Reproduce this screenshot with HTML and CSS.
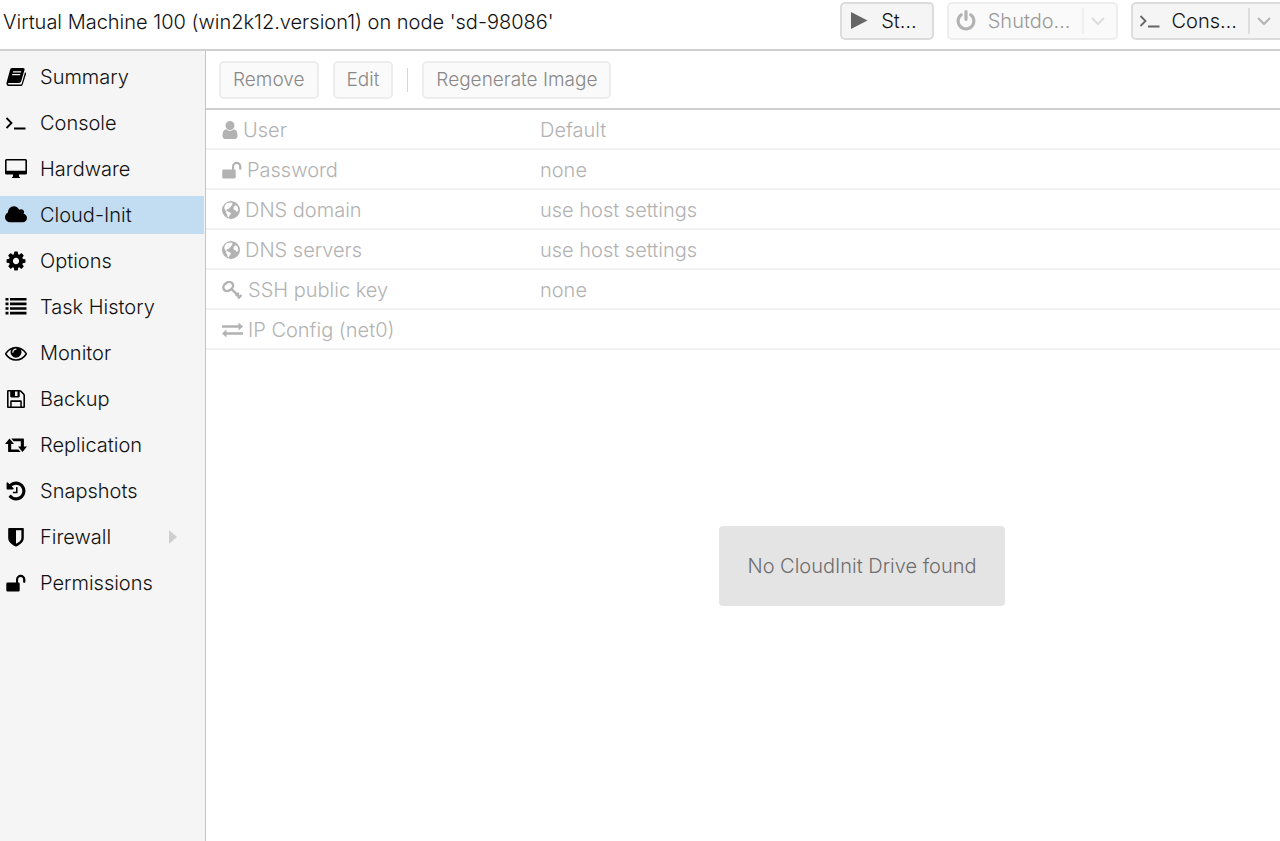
FILE: index.html
```html
<!DOCTYPE html>
<html lang="en">
<head>
    <meta charset="UTF-8">
    <meta name="viewport" content="width=device-width, initial-scale=1.0">
    <title>Virtual Machine 100 - Cloud-Init</title>
    <link rel="stylesheet" href="styles.css">
</head>
<body>
    <!-- icons used more than once -->
    <svg class="sprite" aria-hidden="true">
        <symbol id="i-terminal" viewBox="0 0 22 22">
            <path d="M1.5 6l5 5-5 5M9 16.500h11.500" fill="none" stroke="currentColor" stroke-width="1.800"/>
        </symbol>
        <symbol id="i-unlock" viewBox="0 0 22 22">
            <path d="M2.500 10.500h8.500V7.500a4.700 4.700 0 0 1 9.400 0v2.500a.8.8 0 0 1-.8.8h-.7a.8.8 0 0 1-.8-.8V7.500a2.500 2.500 0 0 0-5 0v3h.4a1.200 1.200 0 0 1 1.200 1.200v6.600a1.200 1.200 0 0 1-1.200 1.200h-11a1.200 1.200 0 0 1-1.200-1.200v-6.600a1.200 1.200 0 0 1 1.200-1.200z"/>
        </symbol>
        <symbol id="i-globe" viewBox="0 0 18 18">
            <path fill-rule="evenodd" d="M9 0a9 9 0 1 0 0 18A9 9 0 0 0 9 0zM7.200 1.800l2.300-.3 1.300.8-.9 1 .8.8-1.500.6-.6 1.300-1.300.9-.8 1.400-1.500-.2-.7 1.100 1 .7.900.9 1.700.5 1.100 1.100-.8 1.500-1 .8-.5 1.700-1.200-.6-.3-2.400-1.200-1.500.4-1.500-1.300-1.500-.9-2.100.9-2.600 1.700-1.900zM12.300 5.100l1.700-.9 1.600 1.600.7 2.600-.6 1.800-1.500.8-.6-1.700-1.700-.6-.5-1.600z"/>
        </symbol>
        <symbol id="i-chevron" viewBox="0 0 14 14">
            <path d="M1 4l6 6 6-6" fill="none" stroke="currentColor" stroke-width="2"/>
        </symbol>
    </svg>

    <header class="header">
        <h1 class="title">Virtual Machine 100 (win2k12.version1) on node 'sd-98086'</h1>
        <div class="actions">
            <button class="btn start" type="button">
                <svg class="icon" viewBox="0 0 22 22"><path d="M3 2l16.500 8.500L3 19z"/></svg>
                St…
            </button>
            <div class="split disabled">
                <button class="btn" type="button" disabled>
                    <svg class="icon" viewBox="0 0 1792 1792"><path d="M1664 896q0 156-61 298t-164 245-245 164-298 61-298-61-245-164-164-245-61-298q0-182 80.500-343t226.500-270q43-32 95.500-25t83.500 50q32 42 24.500 94.500t-49.500 84.500q-98 74-151.500 181t-53.500 228q0 104 40.500 198.500t109.500 163.500 163.500 109.500 198.500 40.500 198.500-40.500 163.500-109.500 109.500-163.500 40.500-198.500q0-121-53.500-228t-151.500-181q-42-32-49.500-84.500t24.500-94.500q31-43 84-50t95 25q146 109 226.500 270t80.500 343zm-640-768v640q0 52-38 90t-90 38-90-38-38-90v-640q0-52 38-90t90-38 90 38 38 90z"/></svg>
                    Shutdo…
                </button>
                <button class="arrow" type="button" aria-label="More shutdown options" disabled><svg><use href="#i-chevron"/></svg></button>
            </div>
            <div class="split">
                <button class="btn" type="button">
                    <svg class="icon"><use href="#i-terminal"/></svg>
                    Cons…
                </button>
                <button class="arrow" type="button" aria-label="More console options"><svg><use href="#i-chevron"/></svg></button>
            </div>
        </div>
    </header>

    <div class="content">
        <nav class="sidebar">
            <a href="#summary">
                <svg class="icon" viewBox="0 0 22 22"><path fill-rule="evenodd" d="M7 2h11c1.300 0 1.900.9 1.500 2.100l-3.300 11.200c-.4 1.200-1 1.700-2.300 1.700H4c-.8 0-1.100.5-.9 1 .3.500.8.600 1.500.6h10.700c.7 0 1.200-.4 1.500-1.200L20 6.300c.9.400 1.200 1 .9 2l-3.100 9.900c-.4 1.200-1.400 1.900-2.600 1.900H4.400c-2 0-3.400-1.500-2.900-3.400L5 4c.4-1.300 1-2 2-2zm1.200 3.300l-.4 1.200h8.100l.4-1.200zm-.9 2.800l-.4 1.200H15l.4-1.200z"/></svg>
                Summary
            </a>
            <a href="#console">
                <svg class="icon"><use href="#i-terminal"/></svg>
                Console
            </a>
            <a href="#hardware">
                <svg class="icon" viewBox="0 0 22 22"><path fill-rule="evenodd" d="M1.500 1h19A1.500 1.500 0 0 1 22 2.500V15a1.500 1.500 0 0 1-1.500 1.500H14v2c.7.300 1 .6 1 1v.5H7v-.5c0-.4.300-.7 1-1v-2H1.500A1.500 1.500 0 0 1 0 15V2.500A1.500 1.500 0 0 1 1.500 1zM1.600 2.600v10.200h18.800V2.600z"/></svg>
                Hardware
            </a>
            <a href="#cloud-init" class="active" aria-current="page">
                <svg class="icon" viewBox="64 0 1920 1792"><path d="M1984 1152q0 159-112.500 271.500t-271.500 112.500h-1088q-185 0-316.500-131.500t-131.500-316.500q0-132 71-241.500t187-163.500q-2-28-2-43 0-212 150-362t362-150q158 0 286.500 88t187.500 230q70-62 166-62 106 0 181 75t75 181q0 75-41 138 129 30 213 134.500t84 239.500z"/></svg>
                Cloud-Init
            </a>
            <a href="#options">
                <svg class="icon" viewBox="0 0 1792 1792"><path d="M1152 896q0-106-75-181t-181-75-181 75-75 181 75 181 181 75 181-75 75-181zm512-109v222q0 12-8 23t-20 13l-185 28q-19 54-39 91 35 50 107 138 10 12 10 25t-9 23q-27 37-99 108t-94 71q-12 0-26-9l-138-108q-44 23-91 38-16 136-29 186-7 28-36 28h-222q-14 0-24.500-8.500t-11.500-21.500l-28-184q-49-16-90-37l-141 107q-10 9-25 9-14 0-25-11-126-114-165-168-7-10-7-23 0-12 8-23 15-21 51-66.500t54-70.500q-27-50-41-99l-183-27q-13-2-21-12.500t-8-23.500v-222q0-12 8-23t19-13l186-28q14-46 39-92-40-57-107-138-10-12-10-24 0-10 9-23 26-36 98.500-107.500t94.500-71.500q13 0 26 10l138 107q44-23 91-38 16-136 29-186 7-28 36-28h222q14 0 24.500 8.500t11.500 21.500l28 184q49 16 90 37l142-107q9-9 24-9 13 0 25 10 129 119 165 170 7 8 7 22 0 12-8 23-15 21-51 66.500t-54 70.500q26 50 41 98l183 28q13 2 21 12.500t8 23.500z"/></svg>
                Options
            </a>
            <a href="#tasks">
                <svg class="icon" viewBox="0 0 22 22"><path d="M.5 2h3v2.600h-3zM5 2h16.500v2.600H5zM.5 6.600h3v2.600h-3zM5 6.600h16.500v2.600H5zM.5 11.200h3v2.600h-3zM5 11.200h16.500v2.600H5zM.5 15.800h3v2.600h-3zM5 15.800h16.500v2.600H5z"/></svg>
                Task History
            </a>
            <a href="#monitor">
                <svg class="icon" viewBox="0 0 1792 1792"><path d="M1664 960q-152-236-381-353 61 104 61 225 0 185-131.500 316.500t-316.500 131.500-316.500-131.500-131.500-316.500q0-121 61-225-229 117-381 353 133 205 333.500 326.500t434.500 121.500 434.500-121.500 333.500-326.500zm-720-384q0-20-14-34t-34-14q-125 0-214.500 89.500t-89.500 214.500q0 20 14 34t34 14 34-14 14-34q0-86 61-147t147-61q20 0 34-14t14-34zm848 384q0 34-20 69-140 230-376.500 368.500t-499.500 138.500-499.500-139-376.500-368q-20-35-20-69t20-69q140-229 376.500-368t499.500-139 499.500 139 376.500 368q20 35 20 69z"/></svg>
                Monitor
            </a>
            <a href="#backup">
                <svg class="icon" viewBox="0 0 22 22"><path fill-rule="evenodd" d="M3.200 2h11.300c.7 0 1.500.3 2 .8l2.700 2.700c.5.500.8 1.300.8 2v11.200c0 .7-.6 1.300-1.300 1.300H3.200c-.7 0-1.200-.6-1.200-1.300V3.300C2 2.600 2.500 2 3.200 2zm.4 1.600v14.800h1.600v-4.900c0-.7.5-1.200 1.200-1.200h9.200c.7 0 1.200.5 1.200 1.200v4.900h1.600V7.500c0-.3-.2-.8-.4-1l-2.500-2.500c-.2-.2-.5-.4-.8-.4v4.700c0 .7-.5 1.200-1.200 1.200H6.400c-.7 0-1.200-.5-1.200-1.200V3.600zm6.400 0v4.500h2.500V3.600zM6.700 14v4.400h8.600V14z"/></svg>
                Backup
            </a>
            <a href="#replication">
                <svg class="icon" viewBox="0 0 22 22"><path d="M4.500 4.500l4.500 5.500H6.200v5.400h7.300l2.200 2.700H3.800a.7.7 0 0 1-.7-.7V10H0zM17.500 18.100L13 12.600h2.800V7.200H8.500L6.300 4.500h11.900c.4 0 .7.300.7.700v7.400H22z"/></svg>
                Replication
            </a>
            <a href="#snapshots">
                <svg class="icon" viewBox="0 0 1792 1792"><path d="M1664 896q0 156-61 298t-164 245-245 164-298 61q-172 0-327-72.500t-264-204.500q-7-10-6.500-22.500t8.500-20.500l137-138q10-9 25-9 16 2 23 12 73 95 179 147t225 52q104 0 198.500-40.500t163.500-109.500 109.500-163.500 40.500-198.500-40.500-198.500-109.500-163.500-163.500-109.500-198.500-40.500q-98 0-188 35.500t-160 101.500l137 138q31 30 14 69-17 40-59 40h-448q-26 0-45-19t-19-45v-448q0-42 40-59 39-17 69 14l130 129q107-101 244.500-156.500t284.500-55.500q156 0 298 61t245 164 164 245 61 298zm-640-288v448q0 14-9 23t-23 9h-320q-14 0-23-9t-9-23v-64q0-14 9-23t23-9h224v-352q0-14 9-23t23-9h64q14 0 23 9t9 23z"/></svg>
                Snapshots
            </a>
            <a href="#firewall">
                <svg class="icon" viewBox="0 0 22 22"><path fill-rule="evenodd" d="M4 2h14c.5 0 .8.400.8.8v9.100c0 3.500-3 6.400-7.500 8.500-.2.100-.4.100-.6 0-4.500-2.100-7.500-5-7.500-8.500V2.800c0-.4.300-.8.8-.8zm7 2.300v13.500c3.300-1.700 5.400-3.700 5.400-5.900V4.300z"/></svg>
                Firewall
                <svg class="expand" viewBox="0 0 8 14"><path d="M0 0l8 7-8 7z"/></svg>
            </a>
            <a href="#permissions">
                <svg class="icon"><use href="#i-unlock"/></svg>
                Permissions
            </a>
        </nav>

        <main class="panel">
            <div class="toolbar">
                <button class="btn" type="button" disabled>Remove</button>
                <button class="btn" type="button" disabled>Edit</button>
                <span class="separator"></span>
                <button class="btn" type="button" disabled>Regenerate Image</button>
            </div>
            <div class="grid">
                <table>
                    <tr>
                        <th scope="row"><svg class="w16" viewBox="256 128 1280 1536"><path d="M1536 1399q0 109-62.500 187t-150.500 78h-854q-88 0-150.500-78t-62.500-187q0-85 8.500-160.500t31.500-152 58.500-131 94-89 134.500-34.500q131 128 313 128t313-128q76 0 134.500 34.500t94 89 58.500 131 31.500 152 8.500 160.500zm-256-887q0 159-112.500 271.500t-271.500 112.500-271.500-112.500-112.500-271.500 112.500-271.500 271.500-112.500 271.500 112.500 112.500 271.500z"/></svg>User</th>
                        <td>Default</td>
                    </tr>
                    <tr>
                        <th scope="row"><svg class="w20" viewBox="1 2 20 18"><use href="#i-unlock" width="22" height="22"/></svg>Password</th>
                        <td>none</td>
                    </tr>
                    <tr>
                        <th scope="row"><svg class="w18"><use href="#i-globe"/></svg>DNS domain</th>
                        <td>use host settings</td>
                    </tr>
                    <tr>
                        <th scope="row"><svg class="w18"><use href="#i-globe"/></svg>DNS servers</th>
                        <td>use host settings</td>
                    </tr>
                    <tr>
                        <th scope="row"><svg class="w21" viewBox="0 1 21 18"><g fill="none" stroke="currentColor" stroke-width="2.400"><ellipse cx="6.200" cy="6.500" rx="5.200" ry="4" transform="rotate(-35 6.200 6.500)"/><path d="M9.500 9l8.800 8.800M13.800 15.800l3-3M16 18.500l3.500-3.500"/></g></svg>SSH public key</th>
                        <td>none</td>
                    </tr>
                    <tr>
                        <th scope="row"><svg class="w21" viewBox="0 0 21 18"><path d="M0 4.200h16.500V1.500L21 5.500l-4.500 4V6.800H0zM21 11.200H4.500V8.500L0 12.500l4.500 4v-2.700H21z"/></svg>IP Config (net0)</th>
                        <td></td>
                    </tr>
                </table>
                <div class="mask">
                    <div class="message">No CloudInit Drive found</div>
                </div>
            </div>
        </main>
    </div>
</body>
</html>
```
FILE: styles.css
```css
* {
    box-sizing: border-box;
}

body {
    margin: 0;
    min-height: 100vh;
    display: flex;
    flex-direction: column;
    overflow-x: hidden;
    font-family: 'Inter', 'Helvetica Neue', Arial, sans-serif;
    font-size: 20px;
    font-weight: 300;
    line-height: 24px;
    color: #111;
    background-color: #fff;
}

svg {
    fill: currentColor;
}

.sprite {
    display: none;
}

button {
    font: inherit;
    color: inherit;
}

.icon {
    width: 22px;
    height: 22px;
    flex: none;
}

/* Header */
.header {
    display: flex;
    justify-content: space-between;
    padding: 2px 0 9px 3px;
    border-bottom: 2px solid #d0d0d0;
    overflow: hidden;
}

.title {
    margin: 0;
    padding-top: 8px;
    font-size: 20px;
    font-weight: 300;
    white-space: nowrap;
}

.actions {
    display: flex;
    gap: 13px;
    margin-right: -4px;
}

.btn {
    height: 38px;
    padding: 0 13px;
    display: flex;
    align-items: center;
    border: 2px solid #dcdcdc;
    border-radius: 5px;
    background-color: #f5f5f5;
    white-space: nowrap;
}

.actions .btn {
    gap: 11px;
    padding: 0 15px 0 6px;
}

.actions .icon {
    color: #666;
}

.split {
    display: flex;
    border: 2px solid #dcdcdc;
    border-radius: 5px;
    background-color: #f5f5f5;
}

.split .btn {
    height: 34px;
    padding: 0 11px 0 6px;
    border: none;
    background: none;
}

.arrow {
    width: 34px;
    height: 26px;
    margin: 4px 0;
    padding: 0 4px 0 0;
    display: flex;
    align-items: center;
    justify-content: center;
    border: none;
    border-left: 2px solid #dedede;
    background: none;
    color: #b5b5b5;
}

.arrow svg {
    width: 14px;
    height: 14px;
}

.disabled {
    border-color: #ededed;
    background-color: #fafafa;
    color: #999;
}

.disabled .icon {
    color: #b2b2b2;
}

.disabled .arrow {
    border-color: #f0f0f0;
    color: #dcdcdc;
}

/* Sidebar */
.content {
    flex: 1;
    display: flex;
}

.sidebar {
    width: 206px;
    flex: none;
    display: flex;
    flex-direction: column;
    gap: 8px;
    padding: 7px 1px 7px 0;
    border-right: 1px solid #c4c4c4;
    background-color: #f5f5f5;
}

.sidebar a {
    height: 38px;
    display: flex;
    align-items: center;
    gap: 13px;
    padding-left: 5px;
    color: #111;
    text-decoration: none;
}

.sidebar .icon {
    color: #000;
}

.sidebar .active {
    background-color: #c2ddf2;
}

.expand {
    width: 8px;
    height: 14px;
    margin-left: auto;
    margin-right: 27px;
    color: #cfcfcf;
}

/* Main panel */
.panel {
    flex: 1;
    display: flex;
    flex-direction: column;
}

.toolbar {
    display: flex;
    align-items: center;
    gap: 14px;
    padding: 10px 13px 9px;
    border-bottom: 2px solid #cfcfcf;
}

.toolbar .btn {
    padding: 0 12px;
    border-color: #ededed;
    background-color: #fafafa;
    color: #888;
    font-size: 19px;
}

.separator {
    width: 1px;
    height: 24px;
    background-color: #d8d8d8;
}

.grid {
    flex: 1;
    position: relative;
}

table {
    width: 100%;
    table-layout: fixed;
    border-collapse: separate;
    border-spacing: 0;
    color: #b2b2b2;
}

th,
td {
    height: 40px;
    padding: 2px 0 0 16px;
    border-bottom: 2px solid #f3f3f3;
    font-weight: 300;
    text-align: left;
}

th {
    width: 318px;
}

th svg {
    height: 18px;
    margin-right: 5px;
    vertical-align: -2px;
}

.w16 {
    width: 16px;
}

.w18 {
    width: 18px;
}

.w20 {
    width: 20px;
}

.w21 {
    width: 21px;
}

/* message shown on top of the grid */
.mask {
    position: absolute;
    inset: 0;
    display: flex;
    align-items: center;
    justify-content: center;
    padding: 180px 0 0 238px;
}

.message {
    padding: 28px;
    border-radius: 4px;
    background-color: #e4e4e4;
    color: #6e6e6e;
}
```
